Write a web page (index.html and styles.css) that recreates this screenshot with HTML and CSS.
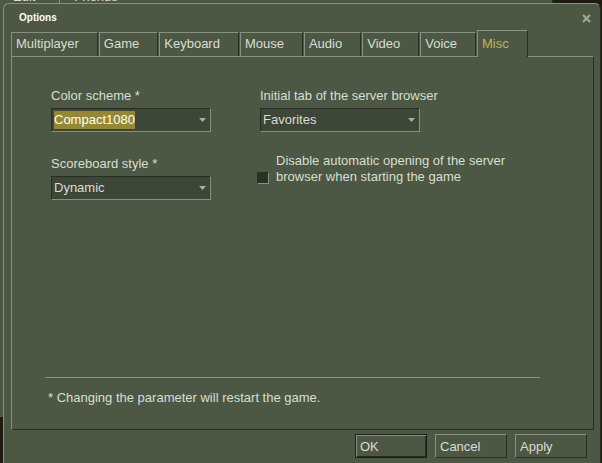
FILE: index.html
```html
<!DOCTYPE html>
<html lang="en">
<head>
	<meta charset="UTF-8">
	<title>Options</title>
	<link rel="stylesheet" href="styles.css">
</head>
<body>
<!-- main window behind the dialog -->
	<div class="backwin">
		<div class="menubar">
			<span class="menu">Edit</span>
			<span class="menu">Friends</span>
		</div>
	</div>
<!-- options dialog -->
	<div class="dialog">
		<div class="titlebar">
			<span class="title">Options</span>
			<svg class="close" width="9" height="9" viewBox="0 0 9 9"><path d="M1 1L8 8M8 1L1 8" stroke="#a4ac9a" stroke-width="2"/></svg>
		</div>
		<div class="tabs">
			<div class="tab">Multiplayer</div>
			<div class="tab">Game</div>
			<div class="tab">Keyboard</div>
			<div class="tab">Mouse</div>
			<div class="tab">Audio</div>
			<div class="tab">Video</div>
			<div class="tab">Voice</div>
			<div class="tab active">Misc</div>
		</div>
		<div class="panel">
			<div class="fields">
				<div class="col">
					<div class="label">Color scheme *</div>
					<div class="combo"><span class="value sel">Compact1080</span><svg width="7" height="4" viewBox="0 0 7 4"><path d="M0 0H7L3.5 4Z" fill="#a8ae9f"/></svg></div>
					<div class="label">Scoreboard style *</div>
					<div class="combo"><span class="value">Dynamic</span><svg width="7" height="4" viewBox="0 0 7 4"><path d="M0 0H7L3.5 4Z" fill="#a8ae9f"/></svg></div>
				</div>
				<div class="col">
					<div class="label">Initial tab of the server browser</div>
					<div class="combo"><span class="value">Favorites</span><svg width="7" height="4" viewBox="0 0 7 4"><path d="M0 0H7L3.5 4Z" fill="#a8ae9f"/></svg></div>
					<div class="check">
						<span class="box"></span>
						<span class="checktext">Disable automatic opening of the server<br>browser when starting the game</span>
					</div>
				</div>
			</div>
			<div class="footer">
				<div class="sep"></div>
				<div class="note">* Changing the parameter will restart the game.</div>
			</div>
		</div>
		<div class="buttons">
			<button class="btn default">OK</button>
			<button class="btn">Cancel</button>
			<button class="btn">Apply</button>
		</div>
	</div>
</body>
</html>
```

FILE: styles.css
```css
*{
	margin:0;
	padding:0;
	box-sizing:border-box;
}
body{
	width:602px;
	height:463px;
	overflow:hidden;
	position:relative;
	background-color:#1f1b12;
	font-family:"Liberation Sans", Arial, sans-serif;
	font-size:13px;
	color:#d8ded3;
}
/* window behind */
.backwin{
	position:absolute;
	left:-2px;
	top:-13px;
	width:555px;
	height:430px;
	background-color:#4c5844;
	border-right:1px solid #282e22;
}
.menubar{
	display:flex;
	height:20px;
}
.menu{
	line-height:20px;
	padding:0 24px 0 14px;
	border-left:1px solid #889180;
}
/* dialog */
.dialog{
	position:absolute;
	left:3px;
	top:3px;
	width:598px;
	height:470px;
	background-color:#4c5844;
	border:1px solid #889180;
	border-right-color:#282e22;
	border-bottom:none;
	border-radius:6px 6px 0 0;
	display:flex;
	flex-direction:column;
}
.titlebar{
	height:26px;
	display:flex;
	justify-content:space-between;
	align-items:flex-start;
	padding:8px 9px 0 15px;
}
.title{
	font-size:10px;
	font-weight:bold;
	line-height:12px;
	color:#fff;
}
.close{
	margin-top:2px;
}
.tabs{
	display:flex;
	align-items:flex-end;
	gap:1px;
	height:26px;
	padding-left:7px;
	position:relative;
	z-index:1;
}
.tab{
	height:24px;
	line-height:22px;
	padding:0 18px 0 4px;
	border-top:1px solid #889180;
	border-left:1px solid #889180;
	border-right:1px solid #282e22;
	background-color:#4c5844;
}
.tab.active{
	height:27px;
	padding-top:2px;
	margin-bottom:-1px;
	color:#c4b550;
}
.panel{
	height:374px;
	margin:0 6px 0 7px;
	border:1px solid #889180;
	border-right-color:#282e22;
	border-bottom-color:#282e22;
	display:flex;
	flex-direction:column;
}
.fields{
	display:grid;
	grid-template-columns:160px 250px;
	column-gap:49px;
	padding:31px 0 0 39px;
}
.label{
	line-height:16px;
	margin-bottom:4px;
}
.combo{
	width:160px;
	height:24px;
	margin-bottom:24px;
	display:flex;
	align-items:center;
	justify-content:space-between;
	padding:0 4px 0 2px;
	background-color:#3e4637;
	border:1px solid;
	border-color:#282e22 #889180 #889180 #282e22;
}
.value{
	line-height:18px;
}
.sel{
	background-color:#958831;
	color:#fff;
}
.check{
	display:flex;
	align-items:flex-end;
	gap:7px;
	margin:-3px 0 0 -3px;
}
.box{
	width:12px;
	height:12px;
	margin-bottom:1px;
	background-color:#2b3125;
	border:1px solid;
	border-color:#282e22 #889180 #889180 #282e22;
}
.checktext{
	line-height:16px;
}
.footer{
	margin-top:auto;
	padding-bottom:23px;
}
.sep{
	width:495px;
	margin-left:33px;
	border-top:1px solid #889180;
}
.note{
	margin-top:12px;
	padding-left:36px;
	line-height:16px;
}
.buttons{
	display:flex;
	justify-content:flex-end;
	gap:8px;
	padding:4px 13px 0 0;
}
.btn{
	width:72px;
	height:24px;
	padding-left:4px;
	line-height:22px;
	text-align:left;
	font:inherit;
	color:#d8ded3;
	background-color:#4c5844;
	border:1px solid;
	border-color:#889180 #282e22 #282e22 #889180;
}
.btn.default{
	border-color:#1c2018;
	box-shadow:inset 1px 1px #889180, inset -1px -1px #282e22;
}
```
